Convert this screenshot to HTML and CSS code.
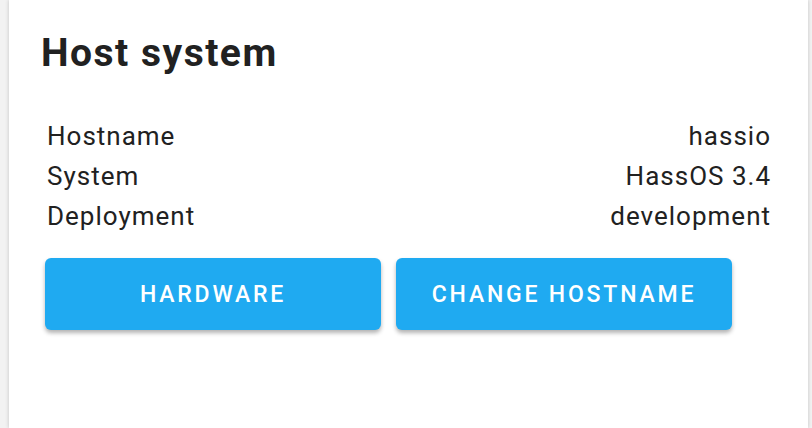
FILE: index.html
```html
<!DOCTYPE html>
<html lang="en">
<head>
    <meta charset="UTF-8">
    <meta name="viewport" content="width=device-width, initial-scale=1.0">
    <title>Host system</title>

    <link rel="stylesheet" href="styles.css">
</head>
<body>
    <div class="card">
        <h1 class="card-title">Host system</h1>

        <div class="info">
            <div class="info-row"><span>Hostname</span><span>hassio</span></div>
            <div class="info-row"><span>System</span><span>HassOS 3.4</span></div>
            <div class="info-row"><span>Deployment</span><span>development</span></div>
        </div>

        <div class="actions">
            <button class="btn">Hardware</button>
            <button class="btn">Change hostname</button>
        </div>
    </div>
</body>
</html>
```

FILE: styles.css
```css
html, body {
    height: 100%;
}

body {
    margin: 0;
    padding: 0 4px 0 9px;
    background: #f2f2f2;
    font-family: Roboto, "Noto Sans", sans-serif;
    color: #212121;
}

.card {
    height: 100%;
    background: white;
    box-shadow: 0 0 4px rgba(0, 0, 0, 0.2);
    padding: 29px 37px 0 32px;
    box-sizing: border-box;
}

.card-title {
    margin: 0;
    font-size: 39px;
    line-height: 48px;
    font-weight: 700;
    letter-spacing: 1.5px;
}

.info {
    margin-top: 39px;
    padding-left: 6px;
}

.info-row {
    display: flex;
    justify-content: space-between;
    font-size: 26px;
    line-height: 40px;
    letter-spacing: 1px;
}

.actions {
    display: flex;
    gap: 15px;
    margin-top: 22px;
    padding-left: 4px;
}

.btn {
    width: 336px;
    height: 72px;
    border: none;
    border-radius: 6px;
    background: #1faaf1;
    color: white;
    font-family: Roboto, "Noto Sans", sans-serif;
    font-size: 23px;
    font-weight: 500;
    letter-spacing: 2.8px;
    text-transform: uppercase;
    box-shadow: 0 3px 4px rgba(0, 0, 0, 0.3);
}
```
